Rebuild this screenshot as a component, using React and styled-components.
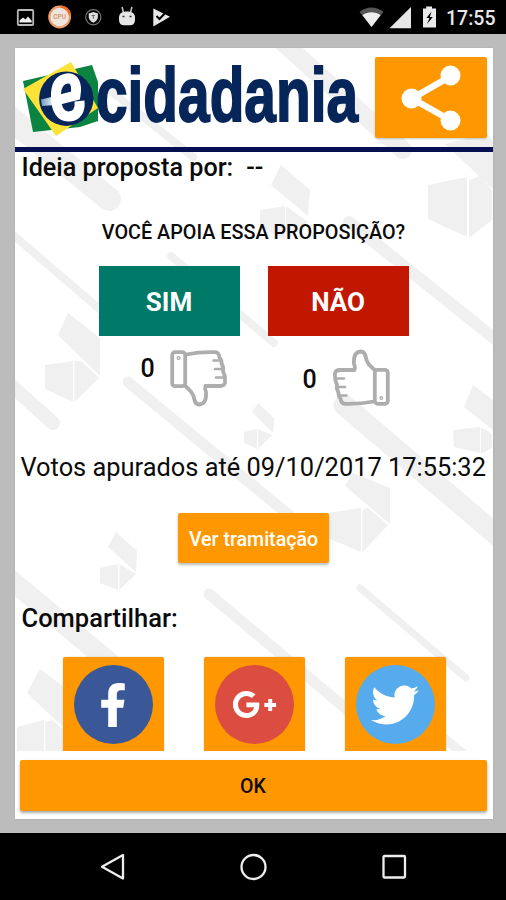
import React from "react";
import styled, { createGlobalStyle } from "styled-components";
import { FaFacebookF, FaGooglePlusG, FaTwitter } from "react-icons/fa";

const stripes = [
  [5, 114, 109, 199, 24],
  [112, 92, 193, 157, 8],
  [280, 40, 403, 150, 18],
  [5, 228, 110, 318, 8],
  [171, 256, 274, 343, 8],
  [349, 222, 500, 343, 12],
  [5, 380, 53, 423, 14],
  [128, 382, 290, 516, 11],
  [344, 405, 500, 538, 21],
  [5, 575, 120, 671, 20],
  [209, 594, 350, 712, 11],
  [360, 588, 466, 678, 7],
  [440, 735, 470, 759, 9],
];

const shapes = [
  "445,144 486,133 493,140 493,189",
  "428,185 467,177 467,237 428,219",
  "469,180 480,176 492,190 492,220 469,238",
  "281,165 310,190 308,216 271,185",
  "260,210 285,206 285,240 260,227",
  "286,206 308,222 286,240",
  "68,313 100,338 100,376 58,335",
  "45,365 73,361 73,402 45,389",
  "74.500,361 81,361 99,378 74.500,402",
  "258,403 274,418 273,433 252,412",
  "244,432 257,429 257,449 244,443",
  "258,429 272,435 258,449",
  "473,385 493,400 493,430 464,407",
  "453,430 480,427 480,453 454,447",
  "481,427 492,434 492,448 481,454",
  "353,473 390,488 390,524 345,486",
  "328,513 361,508 361,552 328,538",
  "362.500,510 368,508 388,525 362.500,552",
  "116,532 137,551 136,572 108,547",
  "100,568 118,564 118,590 100,583",
  "119.500,564 136,574 119.500,590",
  "40,669 64,687 64,728 27,693",
  "17,727 44,720 44,751 17,751",
  "45.500,722 52,720 64,730 64,751 45.500,751",
];

function Backdrop() {
  return (
    <BackdropSvg viewBox="15 48 478 703">
      {stripes.map(([x1, y1, x2, y2, w], i) => (
        <line key={i} x1={x1} y1={y1} x2={x2} y2={y2} strokeWidth={w} stroke="#f0f0f0" strokeLinecap="round" />
      ))}
      {shapes.map((points) => (
        <polygon key={points} points={points} fill="#f0f0f0" />
      ))}
    </BackdropSvg>
  );
}

function NotificationIcons() {
  return (
    <svg width="172" height="34" viewBox="0 0 172 34">
      <rect x="17.8" y="10" width="15.4" height="15" rx="1" fill="none" stroke="#b9b9b9" strokeWidth="1.8" />
      <path d="M19.5 22.5v-2l3.5-3 2.5 2 2.5-3 3.7 4.2v1.8z" fill="#eee" />
      <circle cx="59.6" cy="17" r="10.3" fill="#eee5df" stroke="#eb9c68" strokeWidth="2.2" />
      <path d="M61 6.5a10.5 10.5 0 0 1 9 8" fill="none" stroke="#ee6a22" strokeWidth="2.5" />
      <text x="59.6" y="19.3" textAnchor="middle" fontFamily="Roboto, sans-serif" fontSize="6.5" fontWeight="500" fill="#d98859">CPU</text>
      <circle cx="93.3" cy="17.3" r="7.6" fill="none" stroke="#777" strokeWidth="1.2" />
      <path d="M93.3 12l4.6 1.6v3.2c0 2.8-2 4.8-4.6 6-2.6-1.2-4.6-3.2-4.6-6v-3.2z" fill="#ddd" />
      <path d="M93.3 14.8v4M91.6 15.5h3.4" stroke="#666" strokeWidth="1" />
      <path d="M122 7l1.5 5.5M132 7l-1.5 5.5" stroke="#ccc" strokeWidth="1.5" />
      <path d="M119 17.5c0-4 3-6 8-6s8 2 8 6v2.5c0 3.5-2 5.3-5 5.3h-6c-3 0-5-1.8-5-5.3z" fill="#e6e6e6" />
      <path d="M122.5 16.5h2M129.5 16.5h2" stroke="#333" strokeWidth="1.6" />
      <path d="M153.3 8.5l16.7 8.3-16.7 9.8z" fill="#e8e8e8" />
      <path d="M156.5 16l3 3 7-7.5" fill="none" stroke="#000" strokeWidth="2" />
    </svg>
  );
}

function SystemIcons() {
  return (
    <svg width="80" height="34" viewBox="358 0 80 34">
      <path d="M359.5 12c7-6 17-6 24 0L371.5 27z" fill="#555" />
      <path d="M362.5 15.2c5.5-3.8 12.5-3.8 18 0L371.5 27z" fill="#eee" />
      <path d="M411 7v21.3h-21.5z" fill="#e6e6e6" />
      <path d="M423 8.5h3.2v-2h5.8v2h4v19h-13z" fill="#eaeaea" />
      <path d="M431.5 11.5l-5 6.5h3l-2.5 6 5.8-7h-3z" fill="#000" />
    </svg>
  );
}

function Logo() {
  return (
    <LogoSvg viewBox="22 58 340 82">
      <defs>
        <linearGradient id="swoosh" x1="0" x2="1">
          <stop offset="0" stopColor="#6f9bc4" />
          <stop offset="1" stopColor="#fff" />
        </linearGradient>
      </defs>
      <polygon points="23,81 92,65 98,82 98,121 80,127 33,132" fill="#0a8440" />
      <polygon points="23,89 71,62 98,108 56,136" fill="#fde23a" />
      <circle cx="66.3" cy="98.7" r="27.2" fill="#06265a" />
      <path d="M41 99.5L56 96v9l-14 1z" fill="url(#swoosh)" />
      <path
        d="M52 101.5L75.5 95.5C77.5 84 74 77.5 67 78.5C58 80 55.5 88 56 98C56.5 110 61 117 69 116.5C77 116 80.5 110 79.5 101"
        fill="none"
        stroke="#fff"
        strokeWidth="10"
      />
      <text
        x="96"
        y="121"
        textLength="262"
        lengthAdjust="spacingAndGlyphs"
        fontFamily="'Liberation Sans', sans-serif"
        fontWeight="700"
        fontSize="76"
        fill="#06265a"
        stroke="#06265a"
        strokeWidth="1.8"
      >
        cidadania
      </text>
    </LogoSvg>
  );
}

function ShareIcon() {
  return (
    <svg width="60" height="66" viewBox="0 0 60 66">
      <path d="M50 11L11 33.5 50 55.5" fill="none" stroke="#fff" strokeWidth="6.5" />
      <circle cx="49.5" cy="10.5" r="10" fill="#fff" />
      <circle cx="10.5" cy="33.5" r="10" fill="#fff" />
      <circle cx="49.5" cy="55.5" r="10" fill="#fff" />
    </svg>
  );
}

function ThumbIcon() {
  return (
    <svg width="58" height="58" viewBox="0 0 58 58" fill="none" stroke="#adadad" strokeWidth="3.8" strokeLinejoin="round" strokeLinecap="round">
      <path d="M16 5.5C26 3.5 36 3 45 3.2q4 .3 4.5 5.3q2.5 2.5 2 6q2.500 4 1.500 8q2.500 4 2 11q-.500 3.500-5 3.500H35.500q-1 3 .500 6c.500 7-1 12-6.500 12.500-5 0-5-5-6-8.500C22 42 18 40 15.500 37" />
      <rect x="2.200" y="3.200" width="13" height="34" rx="3" />
      <path d="M43.500 11.500h6M45 20h6M46 28.500h7" strokeWidth="2.600" />
      <circle cx="8.700" cy="9" r="1.300" strokeWidth="1.300" />
    </svg>
  );
}

export default function App() {
  return (
    <>
      <GlobalStyle />
      <Screen>
        <StatusBar>
          <NotificationIcons />
          <StatusRight>
            <SystemIcons />
            <Clock>17:55</Clock>
          </StatusRight>
        </StatusBar>
        <Main>
          <Dialog>
            <ScrollArea>
              <Backdrop />
              <Header>
                <Logo />
                <ShareButton><ShareIcon /></ShareButton>
              </Header>
              <Author>
                <span>Ideia proposta por:</span>
                <span>--</span>
              </Author>
              <Question>VOCÊ APOIA ESSA PROPOSIÇÃO?</Question>
              <VoteRow>
                <VoteButton $color="#007968">SIM</VoteButton>
                <VoteButton $color="#c11700">NÃO</VoteButton>
              </VoteRow>
              <CountRow>
                <Count>
                  <CountValue>0</CountValue>
                  <Thumb><ThumbIcon /></Thumb>
                </Count>
                <Count>
                  <CountValue $low>0</CountValue>
                  <Thumb $up><ThumbIcon /></Thumb>
                </Count>
              </CountRow>
              <Counted>Votos apurados até 09/10/2017 17:55:32</Counted>
              <DetailsButton>Ver tramitação</DetailsButton>
              <ShareTitle>Compartilhar:</ShareTitle>
              <SocialRow>
                <SocialButton>
                  <SocialCircle $color="#3a5897"><FacebookGlyph /></SocialCircle>
                </SocialButton>
                <SocialButton>
                  <SocialCircle $color="#dc4d41"><FaGooglePlusG size={45} /></SocialCircle>
                </SocialButton>
                <SocialButton>
                  <SocialCircle $color="#55abec"><FaTwitter size={48} /></SocialCircle>
                </SocialButton>
              </SocialRow>
            </ScrollArea>
            <Footer>
              <OkButton>OK</OkButton>
            </Footer>
          </Dialog>
        </Main>
        <NavBar>
          <svg width="26" height="28" viewBox="0 0 26 28">
            <path d="M24 2v23.5L3 13.7z" fill="none" stroke="#eee" strokeWidth="2.3" strokeLinejoin="round" />
          </svg>
          <svg width="28" height="28" viewBox="0 0 28 28">
            <circle cx="14.5" cy="14" r="12" fill="none" stroke="#eee" strokeWidth="2.3" />
          </svg>
          <svg width="26" height="26" viewBox="0 0 26 26">
            <rect x="2.5" y="2" width="21.5" height="21.5" rx="1" fill="none" stroke="#eee" strokeWidth="2.3" />
          </svg>
        </NavBar>
      </Screen>
    </>
  );
}

const GlobalStyle = createGlobalStyle`
    * {
        box-sizing: border-box;
    }
    body {
        margin: 0;
        font-family: Roboto, sans-serif;
    }
    svg {
        display: block;
    }
    button {
        border: none;
        padding: 0;
        font-family: inherit;
        cursor: pointer;
    }
`;

const Screen = styled.div`
    width: 506px;
    height: 900px;
    display: flex;
    flex-direction: column;
    overflow: hidden;
    color: #0b0b0b;
`;

const StatusBar = styled.div`
    height: 34px;
    flex-shrink: 0;
    display: flex;
    justify-content: space-between;
    background-color: #000;
`;

const StatusRight = styled.div`
    display: flex;
    align-items: center;
    gap: 8px;
    padding-right: 10px;
`;

const Clock = styled.span`
    width: 50px;
    padding-top: 2px;
    color: #e8e8e8;
    font-size: 19.5px;
    font-weight: 500;
    white-space: nowrap;
`;

const Main = styled.main`
    height: 799px;
    flex-shrink: 0;
    padding: 14px 13.5px 14px 14.5px;
    background-color: #bcbcbc;
`;

const Dialog = styled.div`
    height: 771px;
    background-color: #fff;
    box-shadow: 0 0 2px #aaa;
`;

const ScrollArea = styled.div`
    position: relative;
    isolation: isolate;
    height: 703px;
    overflow: hidden;
    display: flex;
    flex-direction: column;
    > * {
        flex-shrink: 0;
    }
`;

const BackdropSvg = styled.svg`
    position: absolute;
    inset: 0;
    z-index: -1;
    width: 478px;
    height: 703px;
`;

const Header = styled.header`
    height: 104px;
    display: flex;
    justify-content: space-between;
    padding: 9px 6px 0 7px;
    border-bottom: 5px solid #050f52;
`;

const LogoSvg = styled.svg`
    width: 340px;
    height: 82px;
    margin-top: 1px;
    overflow: visible;
`;

const ShareButton = styled.button`
    width: 112px;
    height: 81px;
    display: flex;
    align-items: center;
    justify-content: center;
    background-color: #ff9800;
    border-radius: 2px;
    box-shadow: 0 1px 2px #0003;
`;

const Author = styled.div`
    height: 31px;
    display: flex;
    align-items: center;
    gap: 13px;
    padding-left: 7px;
    font-size: 25.2px;
    font-weight: 500;
`;

const Question = styled.div`
    height: 24px;
    margin-top: 38px;
    line-height: 24px;
    text-align: center;
    font-size: 19.8px;
    font-weight: 500;
`;

const VoteRow = styled.div`
    display: flex;
    justify-content: center;
    gap: 28px;
    margin-top: 21px;
`;

const VoteButton = styled.button`
    width: 141px;
    height: 70px;
    padding-top: 2px;
    background-color: ${({ $color }) => $color};
    color: #fff;
    font-size: 26px;
    font-weight: 700;
`;

const CountRow = styled.div`
    display: flex;
    gap: 75px;
    height: 72px;
    padding: 13px 0 0 126px;
`;

const Count = styled.div`
    display: flex;
    width: 87px;
    justify-content: space-between;
`;

const CountValue = styled.span`
    margin-top: ${({ $low }) => ($low ? "16px" : "5px")};
    line-height: 30px;
    font-size: 25px;
    font-weight: 500;
`;

const Thumb = styled.div`
    height: 58px;
    margin-left: -1px;
    transform: ${({ $up }) => ($up ? "rotate(180deg)" : "none")};
`;

const Counted = styled.div`
    height: 32px;
    margin-top: 43px;
    padding-left: 6px;
    line-height: 32px;
    font-size: 25.4px;
    white-space: nowrap;
`;

const DetailsButton = styled.button`
    align-self: center;
    width: 151px;
    height: 50px;
    margin-top: 30px;
    padding-top: 2px;
    background-color: #ff9800;
    color: #fff;
    border-radius: 2px;
    box-shadow: 0 2px 3px #0004;
    font-size: 19.6px;
    font-weight: 500;
`;

const ShareTitle = styled.div`
    height: 32px;
    margin-top: 39px;
    padding-left: 7px;
    line-height: 32px;
    font-size: 25.5px;
    font-weight: 500;
`;

const SocialRow = styled.div`
    display: flex;
    justify-content: center;
    gap: 40px;
    margin-top: 23px;
    padding-left: 1px;
`;

const SocialButton = styled.button`
    width: 101px;
    height: 110px;
    flex-shrink: 0;
    display: flex;
    justify-content: center;
    padding-top: 8px;
    background-color: #ff9800;
    border-radius: 2px;
    box-shadow: 0 0 2px #0003;
`;

const SocialCircle = styled.span`
    width: 79px;
    height: 79px;
    display: flex;
    align-items: center;
    justify-content: center;
    border-radius: 50%;
    background-color: ${({ $color }) => $color};
    color: #fff;
`;

const FacebookGlyph = styled(FaFacebookF)`
    width: 28px;
    height: 44px;
`;

const Footer = styled.footer`
    padding: 9px 6px 8px 5px;
`;

const OkButton = styled.button`
    display: block;
    width: 100%;
    height: 51px;
    padding-top: 2px;
    background-color: #ff9800;
    color: #0b0b0b;
    border-radius: 2px;
    box-shadow: 0 2px 3px #0005;
    font-size: 19.5px;
    font-weight: 500;
`;

const NavBar = styled.nav`
    height: 67px;
    flex-shrink: 0;
    display: flex;
    align-items: center;
    justify-content: center;
    gap: 114px;
    background-color: #000;
`;
